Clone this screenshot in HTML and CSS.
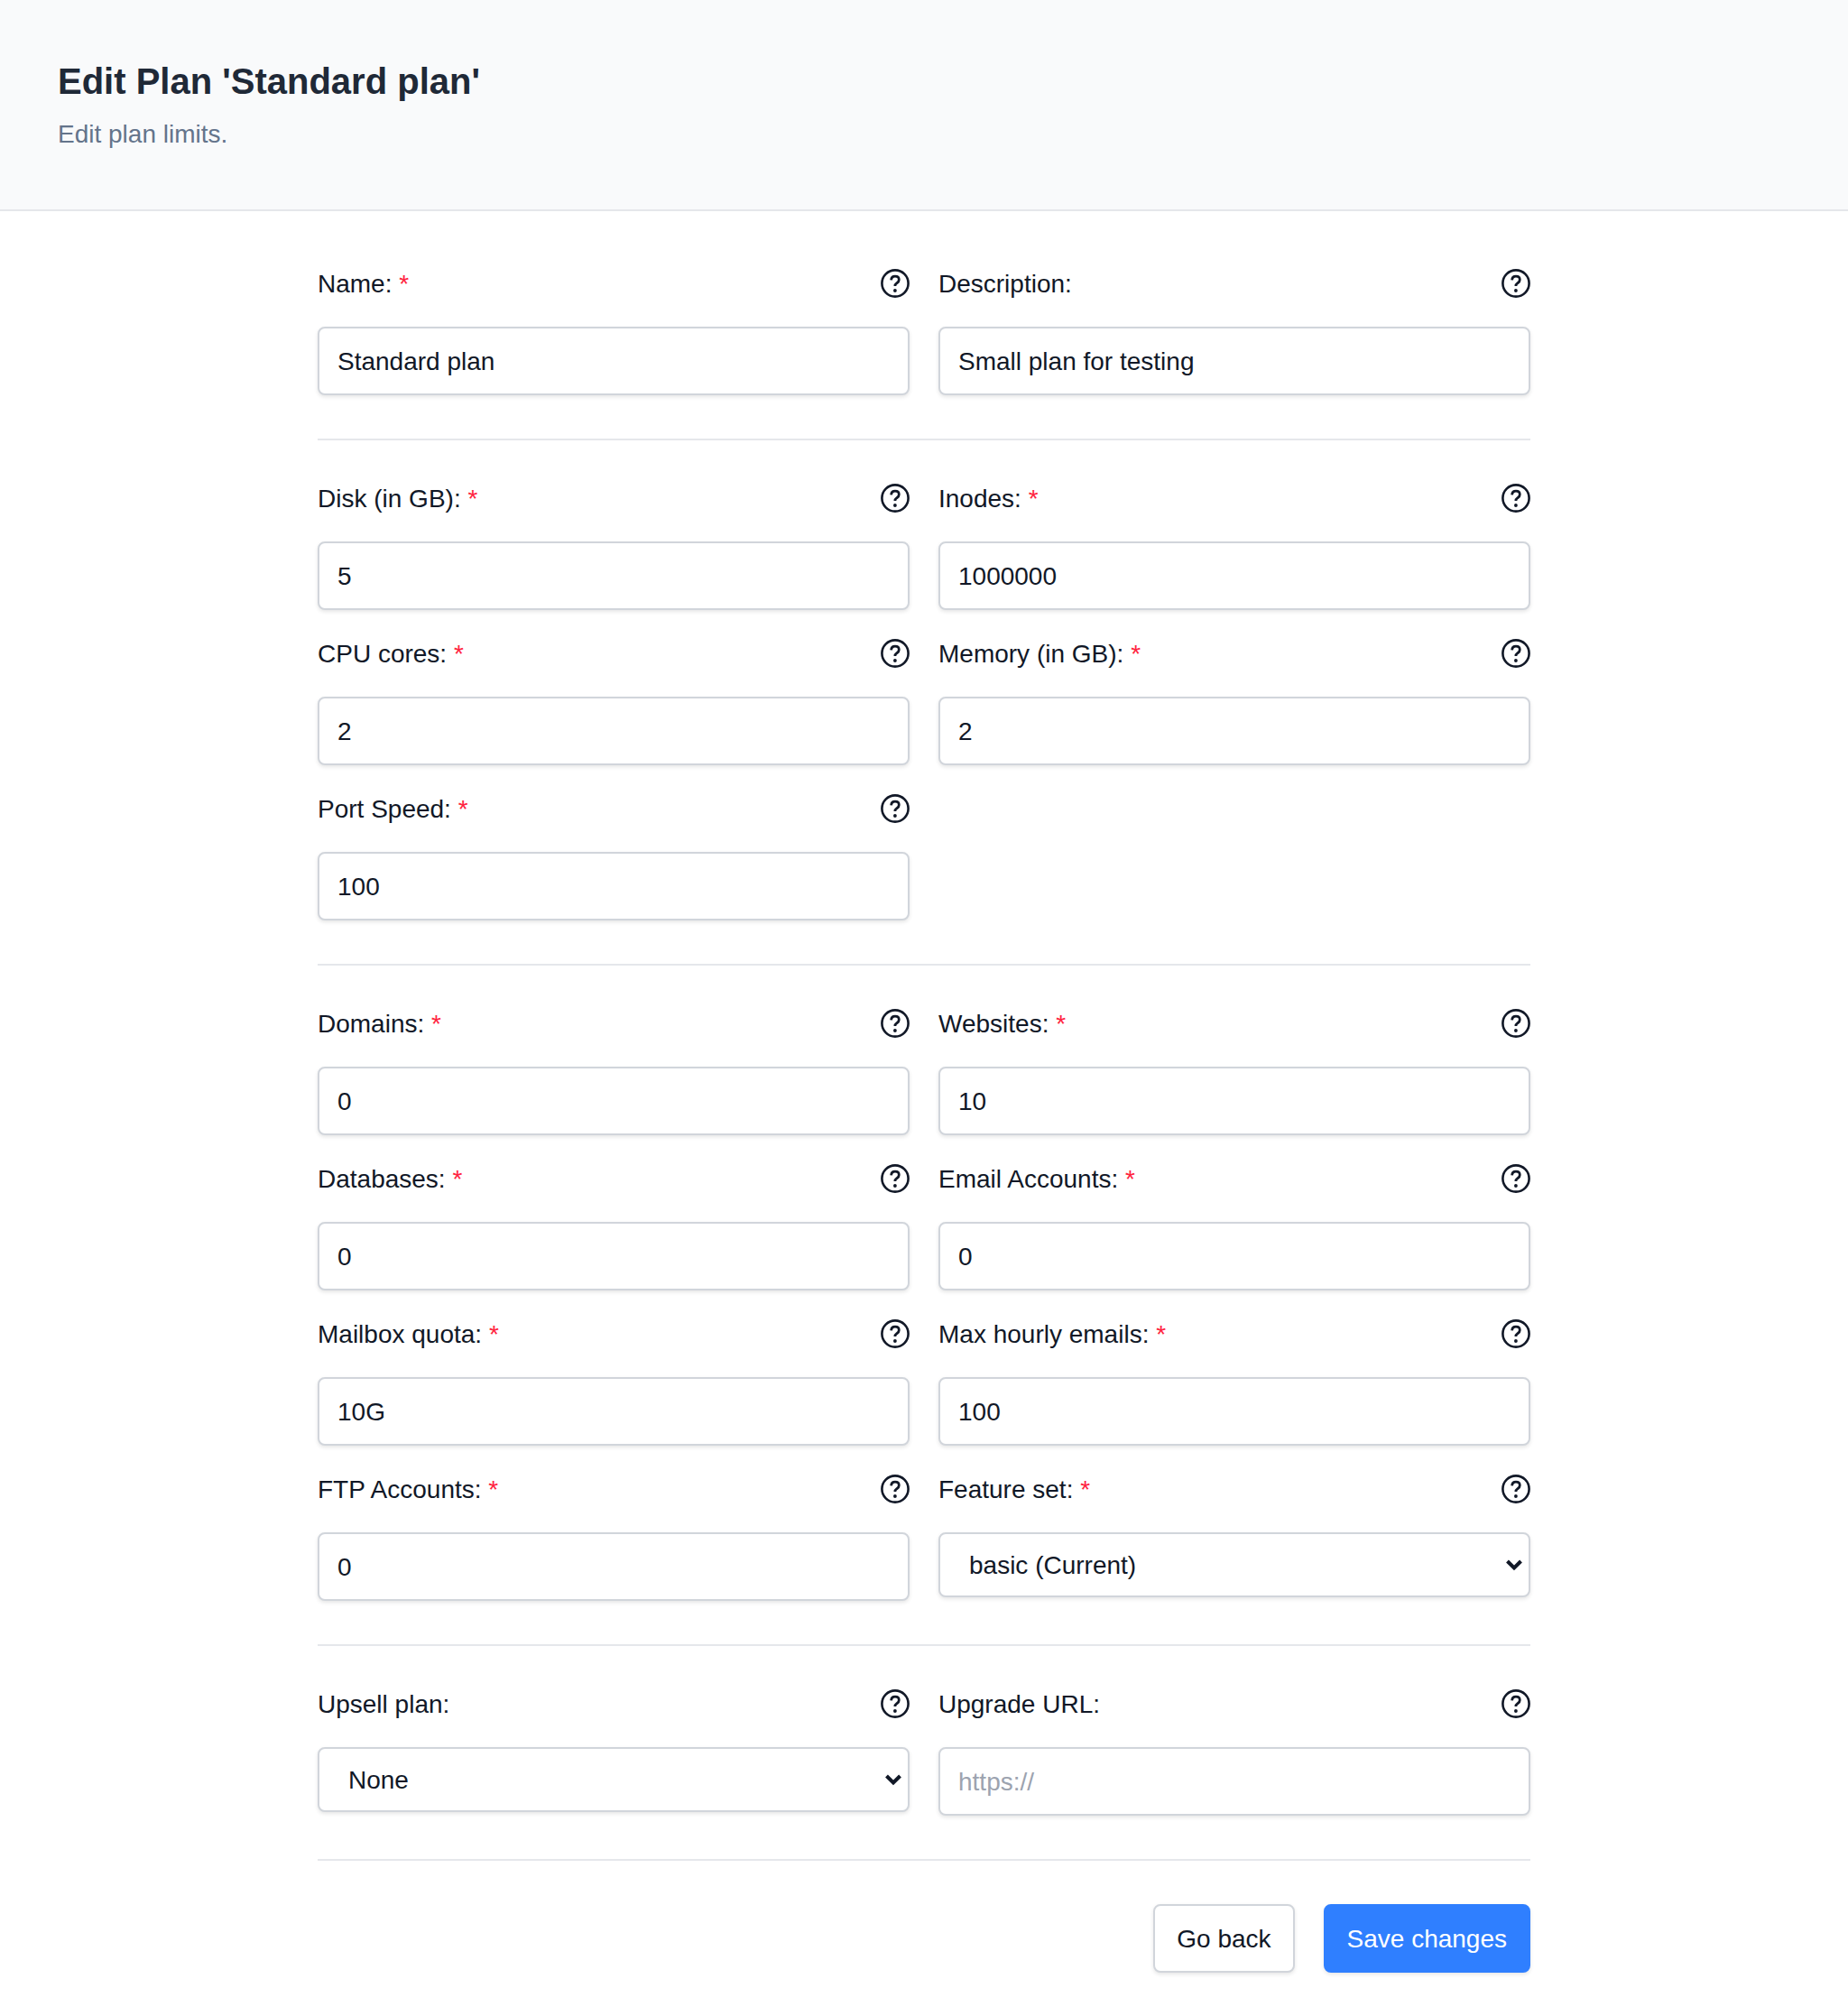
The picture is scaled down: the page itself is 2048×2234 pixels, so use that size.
FILE: index.html
```html
<!DOCTYPE html>
<html lang="en">
<head>
    <meta charset="UTF-8">
    <title>Edit Plan</title>
    <link rel="stylesheet" href="styles.css">
</head>
<body>
    <svg class="defs" width="0" height="0">
        <symbol id="help" viewBox="0 0 32 32">
            <circle cx="16" cy="16" r="14.6" fill="none" stroke="currentColor" stroke-width="2.6"/>
            <path d="M11.6 12.4c.2-2.600 2-4.200 4.400-4.200 2.600 0 4.300 1.600 4.300 3.800 0 1.800-1 2.800-2.400 3.700-1.300.9-2 1.700-2 3.300" fill="none" stroke="currentColor" stroke-width="2.800"/>
            <circle cx="15.900" cy="24" r="1.900" fill="currentColor"/>
        </symbol>
        <symbol id="chevron" viewBox="0 0 20 14">
            <path d="M2.500 3l7.500 7.500 7.500-7.500" fill="none" stroke="currentColor" stroke-width="4"/>
        </symbol>
    </svg>

    <header class="page-header">
        <h1>Edit Plan 'Standard plan'</h1>
        <p>Edit plan limits.</p>
    </header>

    <form class="plan-form">
        <section class="form-row">
            <div class="field">
                <div class="field-head"><label>Name: <span class="req">*</span></label><svg class="help"><use href="#help"/></svg></div>
                <input type="text" value="Standard plan">
            </div>
            <div class="field">
                <div class="field-head"><label>Description:</label><svg class="help"><use href="#help"/></svg></div>
                <input type="text" value="Small plan for testing">
            </div>
        </section>

        <section class="form-row">
            <div class="field">
                <div class="field-head"><label>Disk (in GB): <span class="req">*</span></label><svg class="help"><use href="#help"/></svg></div>
                <input type="text" value="5">
            </div>
            <div class="field">
                <div class="field-head"><label>Inodes: <span class="req">*</span></label><svg class="help"><use href="#help"/></svg></div>
                <input type="text" value="1000000">
            </div>
            <div class="field">
                <div class="field-head"><label>CPU cores: <span class="req">*</span></label><svg class="help"><use href="#help"/></svg></div>
                <input type="text" value="2">
            </div>
            <div class="field">
                <div class="field-head"><label>Memory (in GB): <span class="req">*</span></label><svg class="help"><use href="#help"/></svg></div>
                <input type="text" value="2">
            </div>
            <div class="field">
                <div class="field-head"><label>Port Speed: <span class="req">*</span></label><svg class="help"><use href="#help"/></svg></div>
                <input type="text" value="100">
            </div>
        </section>

        <section class="form-row">
            <div class="field">
                <div class="field-head"><label>Domains: <span class="req">*</span></label><svg class="help"><use href="#help"/></svg></div>
                <input type="text" value="0">
            </div>
            <div class="field">
                <div class="field-head"><label>Websites: <span class="req">*</span></label><svg class="help"><use href="#help"/></svg></div>
                <input type="text" value="10">
            </div>
            <div class="field">
                <div class="field-head"><label>Databases: <span class="req">*</span></label><svg class="help"><use href="#help"/></svg></div>
                <input type="text" value="0">
            </div>
            <div class="field">
                <div class="field-head"><label>Email Accounts: <span class="req">*</span></label><svg class="help"><use href="#help"/></svg></div>
                <input type="text" value="0">
            </div>
            <div class="field">
                <div class="field-head"><label>Mailbox quota: <span class="req">*</span></label><svg class="help"><use href="#help"/></svg></div>
                <input type="text" value="10G">
            </div>
            <div class="field">
                <div class="field-head"><label>Max hourly emails: <span class="req">*</span></label><svg class="help"><use href="#help"/></svg></div>
                <input type="text" value="100">
            </div>
            <div class="field">
                <div class="field-head"><label>FTP Accounts: <span class="req">*</span></label><svg class="help"><use href="#help"/></svg></div>
                <input type="text" value="0">
            </div>
            <div class="field">
                <div class="field-head"><label>Feature set: <span class="req">*</span></label><svg class="help"><use href="#help"/></svg></div>
                <div class="select-wrap">
                    <select><option>basic (Current)</option></select>
                    <svg class="chevron"><use href="#chevron"/></svg>
                </div>
            </div>
        </section>

        <section class="form-row">
            <div class="field">
                <div class="field-head"><label>Upsell plan:</label><svg class="help"><use href="#help"/></svg></div>
                <div class="select-wrap">
                    <select><option>None</option></select>
                    <svg class="chevron"><use href="#chevron"/></svg>
                </div>
            </div>
            <div class="field">
                <div class="field-head"><label>Upgrade URL:</label><svg class="help"><use href="#help"/></svg></div>
                <input type="text" placeholder="https://">
            </div>
        </section>

        <div class="form-actions">
            <button type="button" class="btn">Go back</button>
            <button type="submit" class="btn btn-primary">Save changes</button>
        </div>
    </form>
</body>
</html>
```
FILE: styles.css
```css
* {
    box-sizing: border-box;
}

body {
    margin: 0;
    background: #fff;
    color: #111827;
    font-family: "Liberation Sans", Arial, sans-serif;
    font-size: 28px;
    line-height: 40px;
}

.defs {
    position: absolute;
}

.page-header {
    height: 234px;
    padding: 64px 64px 0;
    background: #f9fafb;
    border-bottom: 2px solid #e5e7eb;
}

.page-header h1 {
    margin: 0;
    color: #1f2937;
    font-size: 40px;
    font-weight: 700;
    line-height: 52px;
}

.page-header p {
    margin: 13px 0 0;
    color: #64748b;
    line-height: 40px;
}

.plan-form {
    width: 1344px;
    margin: 0 auto;
    padding: 64px 0 48px;
}

.form-row {
    display: grid;
    grid-template-columns: 1fr 1fr;
    gap: 32px;
    padding-bottom: 48px;
    margin-bottom: 48px;
    border-bottom: 2px solid #e5e7eb;
}

.field-head {
    display: flex;
    justify-content: space-between;
    align-items: center;
    height: 32px;
    margin-bottom: 32px;
}

.field-head label {
    padding-top: 2px;
}

.req {
    color: #ff2440;
}

.help {
    width: 32px;
    height: 32px;
    color: #111827;
}

input,
select {
    display: block;
    width: 100%;
    background: #fff;
    border: 2px solid #d1d5db;
    border-radius: 8px;
    box-shadow: 0 2px 4px rgba(0, 0, 0, 0.1);
    color: #111827;
    font-family: inherit;
    font-size: 28px;
}

input {
    height: 76px;
    padding: 2px 20px 0;
}

input::placeholder {
    color: #9ca3af;
}

.select-wrap {
    position: relative;
}

select {
    height: 72px;
    padding: 0 28px 0 32px;
    appearance: none;
}

.chevron {
    position: absolute;
    top: 29px;
    right: 8px;
    width: 20px;
    height: 14px;
    color: #111827;
}

.form-actions {
    display: flex;
    justify-content: flex-end;
    gap: 32px;
}

.btn {
    height: 76px;
    padding: 2px 24px 0;
    background: #fff;
    border: 2px solid #d1d5db;
    border-radius: 8px;
    box-shadow: 0 2px 4px rgba(0, 0, 0, 0.1);
    color: #111827;
    font-family: inherit;
    font-size: 28px;
}

.btn-primary {
    background: #2f7fff;
    border-color: #2f7fff;
    color: #fff;
}
```
